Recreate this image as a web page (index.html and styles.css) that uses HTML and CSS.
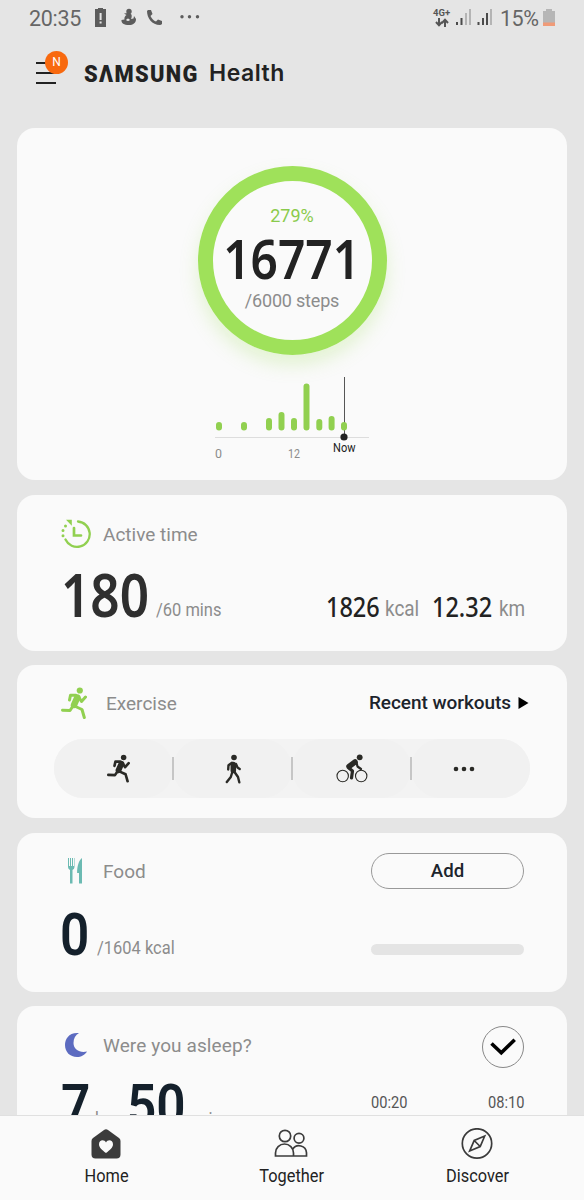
FILE: index.html
```html
<!DOCTYPE html>
<html lang="en">
<head>
    <meta charset="UTF-8">
    <meta name="viewport" content="width=device-width, initial-scale=1.0">
    <title>Samsung Health</title>
    <link rel="stylesheet" href="styles.css">
</head>
<body>
    <div class="status-bar">
        <span class="clock">20:35</span>
        <svg class="status-left" width="110" height="20" viewBox="0 0 110 20" fill="#5c5c5c">
            <path d="M3 1h3V0h5v1h3v18H3z"/>
            <path d="M7.6 5h2v7h-2zM7.6 13.500h2v2h-2z" fill="#e5e5e5"/>
            <circle cx="37" cy="3.500" r="2.700"/>
            <path d="M32 5.500l4-.5c4 0 4.500 3 3 6l2.500-.500.500-2.500 2 3c0 4-3 6-7 6-5 0-8-2-7.500-5l3-.500c-.500-2 .500-3.500 2-4.500z"/>
            <path d="M34 12q2-3 4 0-2 2-4 0z" fill="#e5e5e5"/>
            <path d="M56 2h3l1.500 4-2 2c1.500 3 3 4.500 5.500 5.500l2-2 4 1.500v3q-1 1-2 1C60 17 55 10 55 3z"/>
            <circle cx="90" cy="8.700" r="1.700"/>
            <circle cx="97.500" cy="8.700" r="1.700"/>
            <circle cx="105.500" cy="8.700" r="1.700"/>
        </svg>
        <div class="network">
            <span>4G+</span>
            <svg width="14" height="9" viewBox="0 0 14 9" fill="none" stroke="#555" stroke-width="2"><path d="M4 0v7M1 4l3 3.300L7 4M10 9V2M7 5l3-3.300L13 5"/></svg>
        </div>
        <svg class="signal" width="38" height="18" viewBox="0 0 38 18">
            <path d="M0 14h2v3H0zM4.500 10h2v7h-2zM21.500 14h2v3h-2zM26 10h2v7h-2zM30 5h2v12h-2z" fill="#4b4b4b"/>
            <path d="M9 5h2v12H9zM13 1h2v16h-2zM34 1h2v16h-2z" fill="#b4b4b4"/>
        </svg>
        <span class="percent">15%</span>
        <svg class="battery" width="12" height="18" viewBox="0 0 12 18">
            <path d="M0 2h3V0h6v2h3v12H0z" fill="#b6b6b6"/>
            <path d="M0 13.500h12V17H0z" fill="#f09b78"/>
        </svg>
    </div>

    <header class="header">
        <div class="menu">
            <i></i><i></i><i></i>
            <span class="badge">N</span>
        </div>
        <h1><span class="brand" aria-label="SAMSUNG">SΛMSUNG</span><span class="product">Health</span></h1>
    </header>

    <main>
        <!-- Steps -->
        <section class="card steps">
            <div class="ring">
                <span class="ring-percent">279%</span>
                <span class="ring-count">16771</span>
                <span class="ring-goal">/6000 steps</span>
            </div>
            <svg class="chart" width="156" height="86" viewBox="214 376 156 86">
                <path d="M215 437.500H369" stroke="#ddd"/>
                <path d="M344.500 377V437" stroke="#555"/>
                <g stroke="#91d050" stroke-width="6" stroke-linecap="round">
                    <path d="M219 425v2.500M244 425v2.500M269 421v6.500M281.500 415v12.500M294 421v6.500M306.500 386.500v41M319.300 422v5.500M331.600 419v8.500M344 425v2.500"/>
                </g>
                <circle cx="344" cy="437" r="3.600" fill="#222"/>
                <g font-family="Roboto, sans-serif" font-size="13.500" fill="#8c8c8c">
                    <text x="215" y="458" textLength="7" lengthAdjust="spacingAndGlyphs">0</text>
                    <text x="288" y="458" textLength="12" lengthAdjust="spacingAndGlyphs">12</text>
                    <text x="333" y="451.500" textLength="22.500" lengthAdjust="spacingAndGlyphs" fill="#222">Now</text>
                </g>
            </svg>
        </section>

        <!-- Active time -->
        <section class="card active">
            <div class="card-head">
                <svg class="icon" width="30" height="30" viewBox="0 0 30 30" fill="none" stroke="#91d050" stroke-width="2.300" stroke-linecap="round">
                    <path d="M17 2.500A12.700 12.700 0 1 1 4.500 20.500"/>
                    <path d="M13 9v7.500h7" stroke-width="2.700"/>
                    <path d="M5 .700h5.800v6z" fill="#91d050" stroke="none"/>
                    <path d="M4.500 7v.1M2 11.500v.1M2 16.700v.1" stroke-width="3"/>
                </svg>
                <h2>Active time</h2>
            </div>
            <div class="values">
                <span class="big w-180">180</span>
                <span class="unit w-mins">/60 mins</span>
                <div class="totals">
                    <span class="mid w-1826">1826</span>
                    <span class="mid-unit w-kcal">kcal</span>
                    <span class="mid w-1232">12.32</span>
                    <span class="mid-unit w-km">km</span>
                </div>
            </div>
        </section>

        <!-- Exercise -->
        <section class="card exercise">
            <svg width="0" height="0" class="defs">
                <symbol id="runner" viewBox="0 0 26 32">
                    <circle cx="18.800" cy="3.500" r="3.100" fill="currentColor" stroke="none"/>
                    <path d="M16.300 10.500L13 18" stroke-width="6.500"/>
                    <path d="M15 8.300H9.500L8.500 13M18 10.500l2.500 4 4-4.500M12 19l-3 4.500-7.500-.3M14.500 19.500l6.500 3 2.300 8" stroke-width="3"/>
                </symbol>
            </svg>
            <div class="card-head">
                <svg class="icon green" width="26" height="32" fill="none" stroke="currentColor" stroke-linecap="round" stroke-linejoin="round"><use href="#runner"/></svg>
                <h2>Exercise</h2>
                <a class="recent">Recent workouts
                    <svg width="11" height="12" viewBox="0 0 11 12"><path d="M.5 0L10.500 6 .5 12z"/></svg>
                </a>
            </div>
            <div class="sports">
                <button><svg width="23" height="29" viewBox="0 0 26 32" fill="none" stroke="currentColor" stroke-linecap="round" stroke-linejoin="round"><use href="#runner"/></svg></button>
                <button>
                    <svg width="16" height="30" viewBox="0 0 16 30" fill="none" stroke="currentColor" stroke-linecap="round" stroke-linejoin="round">
                        <circle cx="9" cy="3.500" r="2.800" fill="currentColor" stroke="none"/>
                        <path d="M8.300 10.500v6" stroke-width="5.500"/>
                        <path d="M7 8.700l-3.500 2.500-.3 4.300M11 10l1.500 3.500 2.200 1.500M7.300 18l-1.500 5-4 5M9.500 18l3.500 5 1.300 5.300" stroke-width="2.400"/>
                    </svg>
                </button>
                <button>
                    <svg width="32" height="29" viewBox="0 0 32 29" fill="none" stroke="currentColor" stroke-linecap="round" stroke-linejoin="round">
                        <circle cx="6.700" cy="22" r="5.700" stroke-width="1.100"/>
                        <circle cx="25.200" cy="22" r="5.700" stroke-width="1.100"/>
                        <circle cx="23.700" cy="3.300" r="2.900" fill="currentColor" stroke="none"/>
                        <path d="M19 8l-6 4.500" stroke-width="5.500"/>
                        <path d="M20.500 8.500l1 4 3.500 2.500" stroke-width="2.200"/>
                        <path d="M13.500 14.500l3 2.500-1 7" stroke-width="3.200"/>
                    </svg>
                </button>
                <button>
                    <svg width="22" height="6" viewBox="0 0 22 6" fill="currentColor"><circle cx="3" cy="3" r="2.300"/><circle cx="11" cy="3" r="2.300"/><circle cx="19" cy="3" r="2.300"/></svg>
                </button>
            </div>
        </section>

        <!-- Food -->
        <section class="card food">
            <div class="card-head">
                <svg class="icon" width="16" height="28" viewBox="0 0 16 28" fill="#6bbab2">
                    <path d="M1 1h1v8h1V1h1v8h1V1h1v8h1V1h.500v9q0 2-2 3v13.500h-2.500V13Q1 12 1 10z"/>
                    <path d="M15 1v25.500h-3V16h-1.900C10 9 12 3 15 1z"/>
                </svg>
                <h2>Food</h2>
                <button class="add"><span>Add</span></button>
            </div>
            <div class="values">
                <span class="big w-0">0</span>
                <span class="unit w-1604">/1604 kcal</span>
                <div class="progress"></div>
            </div>
        </section>

        <!-- Sleep -->
        <section class="card sleep">
            <div class="card-head">
                <svg class="icon" width="24" height="26" viewBox="0 0 24 26"><path d="M15 1C5 0 1 7 1 13c0 7 5 12 12 12 4 0 8-2 10-5.500C16 21 9.500 18 9.500 11 9.500 6.500 11.500 3 15 1z" fill="#5c6bc0"/></svg>
                <h2>Were you asleep?</h2>
                <button class="check">
                    <svg width="26" height="18" viewBox="0 0 26 18" fill="none" stroke="#000" stroke-width="3.600"><path d="M1.500 5.500l9.800 9.300L24.700 1.700"/></svg>
                </button>
            </div>
            <div class="values">
                <span class="big w-7">7</span>
                <span class="unit w-hrs">hrs</span>
                <span class="big w-50">50</span>
                <span class="unit w-min">mins</span>
                <div class="times"><span>00:20</span><span>08:10</span></div>
            </div>
        </section>
    </main>

    <nav class="bottom-nav">
        <a>
            <svg width="32" height="32" viewBox="0 0 32 32">
                <path d="M14 2q2-1.500 4 0l11 8q1.500 1.200 1.500 3v13.500q0 4-4 4h-21q-4 0-4-4V13q0-1.800 1.500-3z" fill="#3b3b3b"/>
                <path d="M16 25c-4-3-7-5.500-7-8.800 0-4.700 5.500-5 7-1.800 1.500-3.200 7-2.900 7 1.800 0 3.300-3 5.800-7 8.800z" fill="#fafafa"/>
            </svg>
            <span>Home</span>
        </a>
        <a>
            <svg width="34" height="32" viewBox="0 0 34 32" fill="none" stroke="#3b3b3b" stroke-width="1.700">
                <circle cx="11" cy="8" r="5.700"/>
                <circle cx="25" cy="10.200" r="4.900"/>
                <path d="M19.500 28H1.500v-3a9 9 0 0 1 18 0zM19.500 28H32.500v-3.300a7.500 7.500 0 0 0-13.800-3.500"/>
            </svg>
            <span>Together</span>
        </a>
        <a>
            <svg width="32" height="32" viewBox="0 0 32 32" fill="none" stroke="#3b3b3b" stroke-width="1.700">
                <circle cx="16" cy="15.500" r="14.700"/>
                <path d="M23.700 8l-4.500 10.500-10.500 4.500 4.500-10.500zM13.200 12.500l6 6"/>
            </svg>
            <span>Discover</span>
        </a>
    </nav>
</body>
</html>
```

FILE: styles.css
```css
* {
    box-sizing: border-box;
}
body {
    margin: 0;
    height: 1200px;
    display: flex;
    flex-direction: column;
    overflow: hidden;
    background: #e5e5e5;
    font-family: Roboto, sans-serif;
    color: #222;
}
svg {
    display: block;
    flex: none;
}
h1, h2 {
    margin: 0;
    font-weight: 400;
}
button {
    padding: 0;
    border: none;
    background: none;
    font-family: inherit;
    color: #1c242c;
}
/* Status bar */
.status-bar {
    display: flex;
    height: 36px;
    padding: 8px 29px 0;
    flex: none;
    color: #666;
}
.clock, .percent {
    font-size: 21.5px;
    line-height: 21px;
    white-space: nowrap;
}
.clock {
    width: 63px;
    letter-spacing: -0.3px;
}
.status-left {
    margin-right: 231px;
}
.network {
    width: 18px;
    margin-right: 5px;
    font-size: 9.5px;
    font-weight: 700;
    line-height: 10px;
    color: #555;
}
.network svg {
    margin: 0 0 0 2px;
}
.signal {
    margin-right: 6px;
}
.percent {
    width: 43px;
    letter-spacing: -0.5px;
}
.battery {
    margin-top: 1px;
}
/* Header */
.header {
    display: flex;
    height: 92px;
    padding: 26px 36px 0;
    flex: none;
}
.menu {
    position: relative;
    width: 48px;
}
.menu i {
    display: block;
    width: 20px;
    height: 2px;
    margin-bottom: 8px;
    background: #222;
}
.badge {
    position: absolute;
    left: 9px;
    top: -11px;
    width: 23px;
    height: 23px;
    border-radius: 50%;
    background: #f8690f;
    color: #fff;
    font-size: 12px;
    line-height: 23px;
    text-align: center;
}
h1 {
    display: flex;
    line-height: 26px;
    margin-top: -1px;
    white-space: nowrap;
}
.brand {
    width: 125px;
    font-size: 24px;
    font-weight: 900;
    letter-spacing: 1.5px;
    transform: scaleX(0.91);
    transform-origin: left;
}
.product {
    font-family: Inter, sans-serif;
    font-size: 23px;
    font-weight: 600;
    letter-spacing: 0.5px;
    line-height: 25px;
}
/* Cards */
main {
    flex: 1;
    min-height: 0;
    overflow: hidden;
    padding: 0 17px;
    display: flex;
    flex-direction: column;
    gap: 14px;
}
.card {
    flex: none;
    border-radius: 18px;
    background: #fafafa;
    padding: 0 43px 0 44px;
}
.card-head {
    display: flex;
    align-items: center;
    height: 36px;
}
.card-head h2 {
    margin-top: 2px;
    font-size: 19px;
    line-height: 24px;
    color: #8c8c8c;
    white-space: nowrap;
}
.values {
    display: flex;
    align-items: baseline;
    white-space: nowrap;
}
.values span {
    transform-origin: left;
}
.big {
    font-family: "Noto Sans", sans-serif;
    font-size: 59px;
    font-weight: 600;
    line-height: 60px;
    transform: scaleX(0.87);
    color: #2f2f2f;
}
.unit {
    position: relative;
    top: -1px;
    font-size: 18.5px;
    color: #8c8c8c;
    transform: scaleX(0.89);
}
/* Steps card */
.steps {
    height: 352px;
    padding: 38px 0 0;
    display: flex;
    flex-direction: column;
    align-items: center;
}
.ring {
    width: 189px;
    height: 189px;
    border: 15px solid #9fe15a;
    border-radius: 50%;
    box-shadow: 0 10px 18px rgba(159, 225, 90, 0.25);
    display: flex;
    flex-direction: column;
    align-items: center;
    padding-top: 25px;
    white-space: nowrap;
}
.ring-percent {
    font-size: 18px;
    line-height: 20px;
    color: #8acb4c;
}
.ring-count {
    margin: 5px 0;
    font-family: "Noto Sans", sans-serif;
    font-size: 55px;
    font-weight: 600;
    line-height: 54px;
    transform: scaleX(0.87);
}
.ring-goal {
    font-size: 18px;
    line-height: 22px;
    letter-spacing: -0.2px;
    color: #8c8c8c;
}
.chart {
    margin-top: 21px;
}
/* Active time card */
.active {
    height: 156px;
    margin-top: 1px;
    padding-top: 21px;
}
.active .icon {
    margin-right: 12px;
}
.active .values {
    margin-top: 12px;
}
.totals {
    display: flex;
    align-items: baseline;
    margin-left: auto;
}
.mid {
    font-family: "Noto Sans", sans-serif;
    font-size: 27px;
    font-weight: 500;
    line-height: 30px;
    transform: scaleX(0.87);
}
.mid-unit {
    position: relative;
    top: -1px;
    font-size: 21.5px;
    color: #8c8c8c;
    transform: scaleX(0.88);
}
.w-180 { width: 95px; }
.w-mins { width: 66px; }
.w-1826 { width: 59px; }
.w-kcal { width: 47px; }
.w-1232 { width: 67px; }
.w-km { width: 25px; }
/* Exercise card */
.exercise {
    height: 153px;
    padding: 20px 37px 0;
}
.defs {
    position: absolute;
}
.exercise .card-head {
    padding-left: 7px;
}
.exercise .icon {
    margin-right: 19px;
}
.green {
    color: #91d050;
}
.recent {
    display: flex;
    align-items: center;
    gap: 7px;
    margin-left: auto;
    margin-right: 1px;
    font-size: 19px;
    font-weight: 500;
    line-height: 22px;
    letter-spacing: -0.05px;
    color: #1c242c;
    white-space: nowrap;
}
.sports {
    display: flex;
    margin-top: 18px;
    height: 59px;
    border-radius: 30px;
    background: #f3f3f3;
}
.sports button {
    position: relative;
    flex: none;
    width: 25%;
    display: flex;
    align-items: center;
    justify-content: center;
    border-radius: 30px;
    background: #f1f1f1;
    color: #2a2a26;
}
.sports button:first-child {
    padding-left: 9px;
}
.sports button:last-child {
    padding-right: 13px;
}
.sports button + button::before {
    content: "";
    position: absolute;
    left: -1px;
    top: 18px;
    width: 1.500px;
    height: 23px;
    background: #c6c6c6;
}
/* Food card */
.food {
    height: 159px;
    margin-top: 1px;
    padding-top: 20px;
}
.food .icon {
    margin: 0 20px 0 6px;
}
.add {
    width: 153px;
    height: 36px;
    margin-left: auto;
    border: 1px solid #999;
    border-radius: 18px;
    font-size: 19px;
    font-weight: 500;
}
.add span {
    display: block;
    margin-top: -1px;
    transform: scaleX(0.98);
}
.food .values {
    margin-top: 16px;
}
.food .big, .sleep .big {
    font-family: Roboto, sans-serif;
    font-weight: 600;
    color: #14202b;
}
.food .big {
    margin-left: -1px;
}
.w-0 { width: 37px; }
.w-1604 { width: 78px; }
.progress {
    width: 153px;
    height: 11px;
    margin-left: auto;
    border-radius: 6px;
    background: #e4e4e4;
}
/* Sleep card */
.sleep {
    height: 170px;
    padding-top: 20px;
}
.sleep .card-head {
    height: 42px;
}
.sleep .card-head h2 {
    margin-top: -2px;
    letter-spacing: 0.1px;
}
.sleep .icon {
    margin: -5px 15px 0 3px;
}
.check {
    display: flex;
    align-items: center;
    justify-content: center;
    width: 42px;
    height: 42px;
    margin-left: auto;
    border: 1px solid #888;
    border-radius: 50%;
}
.sleep .values {
    margin-top: 8px;
}
.w-7 { width: 34px; }
.w-hrs { width: 32px; }
.w-50 { width: 67px; }
.w-min { width: 40px; }
.times {
    display: flex;
    gap: 81px;
    margin-left: auto;
    padding-top: 16px;
    align-self: flex-start;
}
.times span {
    width: 36px;
    font-size: 17px;
    line-height: 20px;
    color: #555;
    transform: scaleX(0.86);
}
/* Bottom navigation */
.bottom-nav {
    flex: none;
    display: flex;
    justify-content: space-between;
    height: 85px;
    padding: 12px 14px 0;
    border-top: 1px solid #e0e0e0;
    background: #fafafa;
}
.bottom-nav a {
    display: flex;
    flex-direction: column;
    align-items: center;
    width: 185px;
    font-size: 19px;
    line-height: 24px;
    color: #222;
}
.bottom-nav svg {
    position: relative;
    left: -1px;
}
.bottom-nav span {
    margin-top: 4px;
    transform: scaleX(0.86);
}
```
